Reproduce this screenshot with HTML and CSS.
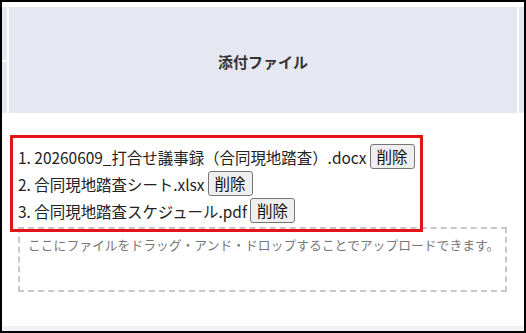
FILE: index.html
```html
<!DOCTYPE html>
<html lang="ja">
<head>
<meta charset="utf-8">
<link rel="stylesheet" href="styles.css">
</head>
<body>
<div class="frame">
  <div class="top-gap"></div>
  <div class="head-row">
    <div class="sliver sliver-left"><div class="sliver-line"></div></div>
    <div class="th">添付ファイル</div>
    <div class="sliver"></div>
  </div>
  <div class="cell">
    <div class="files">
      <div class="file-row"><span class="file-name">1. 20260609_打合せ議事録（合同現地踏査）.docx</span><button class="del">削除</button></div>
      <div class="file-row"><span class="file-name">2. 合同現地踏査シート.xlsx</span><button class="del">削除</button></div>
      <div class="file-row"><span class="file-name">3. 合同現地踏査スケジュール.pdf</span><button class="del">削除</button></div>
    </div>
    <div class="drop">ここにファイルをドラッグ・アンド・ドロップすることでアップロードできます。</div>
    <div class="annot"></div>
  </div>
  <div class="bottom-strip"></div>
</div>
</body>
</html>
```
FILE: styles.css
```css
html, body {
  margin: 0;
  padding: 0;
  background: #000;
}
.frame {
  width: 526px;
  height: 333px;
  box-sizing: border-box;
  border: 2px solid #000;
  background: #fff;
  display: flex;
  flex-direction: column;
  font-family: "Noto Sans CJK JP", "Noto Sans", sans-serif;
  color: #222;
}
.top-gap {
  height: 5px;
  flex: none;
}
.head-row {
  height: 106px;
  flex: none;
  display: flex;
}
.sliver {
  width: 5px;
  flex: none;
  background: #e5e8f1;
}
.sliver-left {
  display: flex;
  flex-direction: column;
  padding-top: 53px;
  box-sizing: border-box;
}
.sliver-line {
  height: 2px;
  background: #fff;
}
.th {
  flex: 1;
  margin: 0 2px;
  background: #e5e8f1;
  display: flex;
  align-items: center;
  justify-content: center;
  font-weight: bold;
  font-size: 15px;
  color: #333;
  padding-top: 2px;
  box-sizing: border-box;
}
.cell {
  flex: 1;
  position: relative;
  padding: 30px 17px 0 16px;
  display: flex;
  flex-direction: column;
}
.files {
  display: flex;
  flex-direction: column;
}
.file-row {
  height: 27px;
  display: flex;
  align-items: center;
  font-size: 15.45px;
  white-space: nowrap;
}
.file-name {
  margin-right: 3px;
}
.del {
  font-family: "Noto Sans CJK JP", sans-serif;
  font-size: 15.5px;
  height: 25px;
  padding: 0 6px;
  border: 1px solid #767676;
  border-radius: 3px;
  background: #efefef;
  color: #111;
  line-height: 1;
}
.drop {
  margin-top: 3px;
  height: 65px;
  box-sizing: border-box;
  border: 2px dashed #c8c8c8;
  padding: 6px 8px;
  font-size: 12.8px;
  color: #777;
  white-space: nowrap;
}
.annot {
  position: absolute;
  left: 8px;
  top: 22px;
  width: 413px;
  height: 97px;
  box-sizing: border-box;
  border: 3px solid #e3141c;
}
.bottom-strip {
  height: 5px;
  flex: none;
  background: #f0f1f5;
}
```
